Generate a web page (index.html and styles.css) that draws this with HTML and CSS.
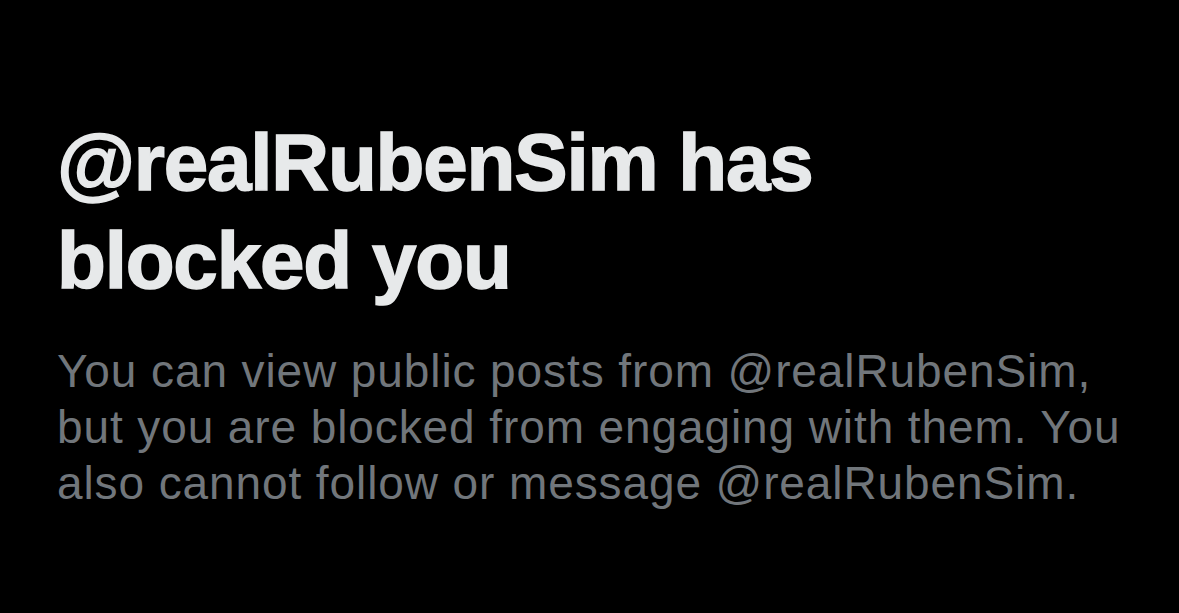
FILE: index.html
```html
<!DOCTYPE html>
<html>
<head>
<meta charset="utf-8">
<link rel="stylesheet" href="styles.css">
</head>
<body>
<main class="notice">
  <h1 class="title">@realRubenSim has<br>blocked you</h1>
  <p class="desc">You can view public posts from @realRubenSim,<br>but you are blocked from engaging with them. You<br>also cannot follow or message @realRubenSim.</p>
</main>
</body>
</html>
```
FILE: styles.css
```css
html, body {
  margin: 0;
  padding: 0;
  background: #000;
  width: 1179px;
  height: 613px;
  overflow: hidden;
}
.notice {
  padding: 114px 0 0 57px;
  font-family: "Liberation Sans", Arial, sans-serif;
}
.title {
  margin: 0;
  font-size: 80px;
  line-height: 98px;
  font-weight: 700;
  color: #e7e9ea;
  -webkit-text-stroke: 1.5px #e7e9ea;
  letter-spacing: -1.2px;
  white-space: nowrap;
}
.desc {
  margin: 33px 0 0 0;
  font-size: 46px;
  line-height: 56px;
  font-weight: 400;
  color: #71767b;
  letter-spacing: 0.9px;
  white-space: nowrap;
}
```
